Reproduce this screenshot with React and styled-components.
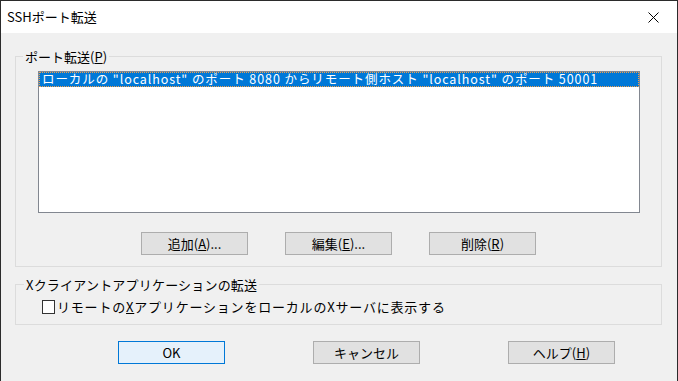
import React from "react";
import styled, { createGlobalStyle } from "styled-components";

const GlobalStyle = createGlobalStyle`
  html, body {
    margin: 0;
    padding: 0;
    background: #ffffff;
  }
  * {
    box-sizing: border-box;
  }
`;

const Window = styled.div`
  width: 678px;
  height: 381px;
  background: #f0f0f0;
  border: 1px solid #2b2b2b;
  border-bottom: none;
  font-family: "Noto Sans CJK JP", "Noto Sans", sans-serif;
  font-size: 13px;
  color: #000;
  overflow: hidden;
`;

const TitleBar = styled.div`
  height: 32px;
  background: #ffffff;
  display: flex;
  align-items: center;
  justify-content: space-between;
  padding-left: 6px;
`;

const Title = styled.span`
  font-size: 13px;
  line-height: 16px;
`;

const CloseButton = styled.div`
  width: 46px;
  height: 32px;
  display: flex;
  align-items: center;
  justify-content: center;
  margin-right: 1px;
`;

const Body = styled.div`
  padding: 0 15px 0 14px;
`;

const Group = styled.fieldset`
  margin: ${(p) => p.$top}px 0 0 0;
  padding: 0 0 ${(p) => p.$bottom}px 0;
  border: 1px solid #dcdcdc;
  min-width: 0;
`;

const Legend = styled.legend`
  margin-left: ${(p) => p.$indent}px;
  padding: 0 2px;
  line-height: 15px;
  font-size: 13px;
  letter-spacing: ${(p) => p.$spacing || 0}px;
`;

const ListBox = styled.div`
  margin: 7px 21px 0 22px;
  height: 142px;
  background: #ffffff;
  border: 1px solid #828790;
  padding: 0;
`;

const ListRow = styled.div`
  height: 15px;
  line-height: 14px;
  padding-left: 3px;
  white-space: nowrap;
  background: ${(p) => (p.$selected ? "#0078d7" : "transparent")};
  color: ${(p) => (p.$selected ? "#ffffff" : "#000000")};
  outline: ${(p) => (p.$selected ? "1px dotted #f5a04a" : "none")};
  outline-offset: -1px;
  font-size: 12.5px;
  letter-spacing: 0.92px;
`;

const ButtonRow = styled.div`
  display: flex;
  justify-content: ${(p) => p.$justify || "center"};
  gap: ${(p) => p.$gap}px;
  margin-top: ${(p) => p.$top}px;
  padding-left: ${(p) => p.$left || 0}px;
`;

const Button = styled.div`
  width: 107px;
  height: 23px;
  display: flex;
  align-items: center;
  justify-content: center;
  background: ${(p) => (p.$default ? "#e5f1fb" : "#e1e1e1")};
  border: 1px solid ${(p) => (p.$default ? "#0078d7" : "#adadad")};
  font-size: 13px;
  line-height: 15px;
`;

const CheckRow = styled.label`
  display: flex;
  align-items: center;
  margin: 7px 0 0 26px;
  height: 15px;
  line-height: 15px;
  letter-spacing: 0.8px;
`;

const CheckBox = styled.span`
  width: 13px;
  height: 14px;
  background: #ffffff;
  border: 1px solid #333333;
  margin-right: 2px;
`;

const CloseIcon = () => (
  <svg width="11" height="11" viewBox="0 0 11 11">
    <path d="M0.5 0.5 L10.5 10.5 M10.5 0.5 L0.5 10.5" stroke="#000" strokeWidth="1" />
  </svg>
);

const App = () => {
  return (
    <>
      <GlobalStyle />
      <Window>
        <TitleBar>
          <Title>SSHポート転送</Title>
          <CloseButton>
            <CloseIcon />
          </CloseButton>
        </TitleBar>
        <Body>
          <Group $top={16} $bottom={11}>
            <Legend $indent={7}>
              ポート転送(<u>P</u>)
            </Legend>
            <ListBox>
              <ListRow $selected>
                ローカルの "localhost" のポート 8080 からリモート側ホスト "localhost" のポート 50001
              </ListRow>
            </ListBox>
            <ButtonRow $top={19} $gap={37}>
              <Button>
                追加(<u>A</u>)...
              </Button>
              <Button>
                編集(<u>E</u>)...
              </Button>
              <Button>
                削除(<u>R</u>)
              </Button>
            </ButtonRow>
          </Group>
          <Group $top={10} $bottom={10}>
            <Legend $indent={8} $spacing={0.2}>
              Xクライアントアプリケーションの転送
            </Legend>
            <CheckRow>
              <CheckBox />
              リモートの<u>X</u>アプリケーションをローカルのXサーバに表示する
            </CheckRow>
          </Group>
          <ButtonRow $top={16} $gap={88} $justify="flex-start" $left={103}>
            <Button $default>OK</Button>
            <Button>キャンセル</Button>
            <Button>
              ヘルプ(<u>H</u>)
            </Button>
          </ButtonRow>
        </Body>
      </Window>
    </>
  );
};

export default App;
